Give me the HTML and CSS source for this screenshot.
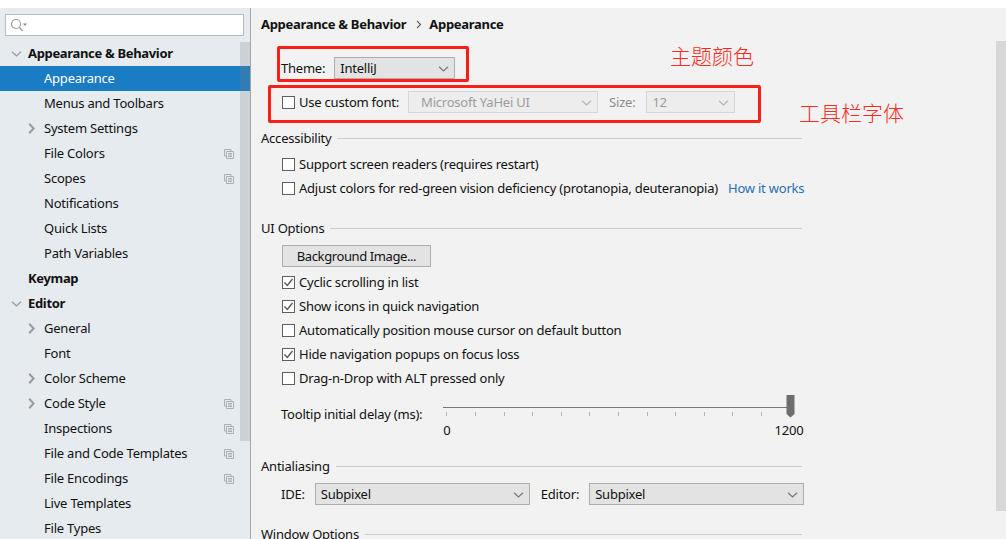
FILE: index.html
```html
<!DOCTYPE html>
<html lang="en">
<head>
<meta charset="utf-8">
<title>Settings</title>
<link rel="stylesheet" href="styles.css">
</head>
<body>
<svg class="defs" width="0" height="0" aria-hidden="true">
  <defs>
    <symbol id="down" viewBox="0 0 11 6"><path d="M1 .8 5.500 5 10 .8" fill="none" stroke="currentColor" stroke-width="1.200"/></symbol>
    <symbol id="right" viewBox="0 0 7 11"><path d="M1.200 .8 5.600 5.500 1.200 10.200" fill="none" stroke="#9a9a9a" stroke-width="2"/></symbol>
    <symbol id="copy" viewBox="0 0 10 10"><path d="M.5.5h6.500v1.500M.5.5v6.500h2M2.500 2.500h7v7h-7zM4 4.500h4M4 6h4M4 7.500h4" fill="none" stroke="#a9b0b5" stroke-width="1"/></symbol>
    <symbol id="tick" viewBox="0 0 13 13"><path d="M2.500 6.500 5.300 9.500 10.500 3" fill="none" stroke="#555" stroke-width="1.300"/></symbol>
  </defs>
</svg>
<div class="app">
  <aside class="sidebar">
    <div class="search">
      <svg class="search-icon" width="18" height="14" viewBox="0 0 18 14"><circle cx="6" cy="6" r="4.500" fill="none" stroke="#a0a0a0" stroke-width="1.200"/><path d="M9.500 9.500 12.500 13" stroke="#a0a0a0" stroke-width="1.400"/><path d="M13 5.500h4l-2 2.500z" fill="#888"/></svg>
    </div>
    <ul class="tree">
      <li class="row top"><svg class="arrow-down"><use href="#down"/></svg>Appearance &amp; Behavior</li>
      <li class="row child selected">Appearance</li>
      <li class="row child">Menus and Toolbars</li>
      <li class="row child"><svg class="arrow-right"><use href="#right"/></svg>System Settings</li>
      <li class="row child">File Colors<svg class="copy"><use href="#copy"/></svg></li>
      <li class="row child">Scopes<svg class="copy"><use href="#copy"/></svg></li>
      <li class="row child">Notifications</li>
      <li class="row child">Quick Lists</li>
      <li class="row child">Path Variables</li>
      <li class="row top">Keymap</li>
      <li class="row top"><svg class="arrow-down"><use href="#down"/></svg>Editor</li>
      <li class="row child"><svg class="arrow-right"><use href="#right"/></svg>General</li>
      <li class="row child">Font</li>
      <li class="row child"><svg class="arrow-right"><use href="#right"/></svg>Color Scheme</li>
      <li class="row child"><svg class="arrow-right"><use href="#right"/></svg>Code Style<svg class="copy"><use href="#copy"/></svg></li>
      <li class="row child">Inspections<svg class="copy"><use href="#copy"/></svg></li>
      <li class="row child">File and Code Templates<svg class="copy"><use href="#copy"/></svg></li>
      <li class="row child">File Encodings<svg class="copy"><use href="#copy"/></svg></li>
      <li class="row child">Live Templates</li>
      <li class="row child">File Types</li>
    </ul>
    <div class="side-scroll"></div>
  </aside>
  <main class="main">
    <h1 class="crumbs"><span>Appearance &amp; Behavior</span><svg class="crumb-sep" width="6" height="9" viewBox="0 0 6 9"><path d="M1 .8 4.500 4.500 1 8.200" fill="none" stroke="#555" stroke-width="1.100"/></svg><span>Appearance</span></h1>

    <div class="line theme-line">
      <span class="label">Theme:</span>
      <div class="select theme-select">IntelliJ<svg class="caret"><use href="#down"/></svg></div>
    </div>
    <div class="line font-line">
      <span class="check"></span><span class="check-text">Use custom font:</span>
      <div class="select disabled font-select">Microsoft YaHei UI<svg class="caret"><use href="#down"/></svg></div>
      <span class="label faded size-label">Size:</span>
      <div class="select disabled size-select">12<svg class="caret"><use href="#down"/></svg></div>
    </div>

    <div class="group group-access"><span>Accessibility</span><i></i></div>
    <div class="opt first-opt"><span class="check"></span><span class="check-text">Support screen readers (requires restart)</span></div>
    <div class="opt"><span class="check"></span><span class="check-text">Adjust colors for red-green vision deficiency (protanopia, deuteranopia)</span><a class="link">How it works</a></div>

    <div class="group group-ui"><span>UI Options</span><i></i></div>
    <button class="btn">Background Image...</button>
    <div class="opt tight"><span class="check"><svg class="tick"><use href="#tick"/></svg></span><span class="check-text">Cyclic scrolling in list</span></div>
    <div class="opt"><span class="check"><svg class="tick"><use href="#tick"/></svg></span><span class="check-text">Show icons in quick navigation</span></div>
    <div class="opt"><span class="check"></span><span class="check-text">Automatically position mouse cursor on default button</span></div>
    <div class="opt"><span class="check"><svg class="tick"><use href="#tick"/></svg></span><span class="check-text">Hide navigation popups on focus loss</span></div>
    <div class="opt"><span class="check"></span><span class="check-text">Drag-n-Drop with ALT pressed only</span></div>

    <div class="slider-line">
      <span class="label slider-label">Tooltip initial delay (ms):</span>
      <div class="slider">
        <div class="track"></div>
        <div class="ticks"><i></i><i></i><i></i><i></i><i></i><i></i><i></i><i></i><i></i><i></i><i></i><i></i></div>
        <div class="scale"><span>0</span><span>1200</span></div>
        <svg class="thumb" width="9" height="23" viewBox="0 0 9 23"><path d="M.5 0h8v19l-4 3.500-4-3.500z" fill="#6e6e6e"/></svg>
      </div>
    </div>

    <div class="group group-anti"><span>Antialiasing</span><i></i></div>
    <div class="line anti-line">
      <span class="label">IDE:</span>
      <div class="select anti-select">Subpixel<svg class="caret"><use href="#down"/></svg></div>
      <span class="label editor-label">Editor:</span>
      <div class="select anti-select">Subpixel<svg class="caret"><use href="#down"/></svg></div>
    </div>
    <div class="group group-window"><span>Window Options</span><i></i></div>

    <div class="main-scroll"></div>
    <div class="mark mark-theme"></div>
    <div class="mark mark-font"></div>
    <div class="note note-theme">主题颜色</div>
    <div class="note note-font">工具栏字体</div>
  </main>
</div>
</body>
</html>
```
FILE: styles.css
```css
* { box-sizing: border-box; }
html, body { margin: 0; padding: 0; height: 539px; overflow: hidden; background: #fff; }
body {
  font-family: "Noto Sans", "Noto Sans CJK SC", sans-serif;
  font-size: 13px;
  letter-spacing: -.22px;
  color: #111;
}
.defs { position: absolute; }
.app { display: flex; height: 531px; margin-top: 8px; overflow: hidden; }

/* sidebar */
.sidebar {
  position: relative;
  width: 251px;
  flex: none;
  background: #e6ebf0;
  border-right: 1px solid #a5a8aa;
  padding-top: 6px;
}
.search {
  height: 22px;
  margin: 0 6px 0 5px;
  background: #fff;
  border: 1px solid #b9bcbe;
  display: flex;
  align-items: center;
  padding-left: 4px;
}
.tree { list-style: none; margin: 5px 0 0; padding: 0; }
.row {
  position: relative;
  height: 25px;
  line-height: 25px;
  white-space: nowrap;
}
.top { padding-left: 28px; font-weight: 700; letter-spacing: -.33px; }
.child { padding-left: 44px; }
.selected { background: #1a7cc3; color: #fff; }
.arrow-down { position: absolute; left: 11px; top: 10px; width: 11px; height: 6px; color: #9a9a9a; stroke-width: 2; }
.arrow-right { position: absolute; left: 28px; top: 7px; width: 7px; height: 11px; }
.copy { position: absolute; left: 224px; top: 8px; width: 10px; height: 10px; }
.side-scroll {
  position: absolute;
  left: 240px;
  top: 34px;
  width: 10px;
  height: 399px;
  background: rgba(120, 125, 130, .24);
}

/* main */
.main { position: relative; flex: 1; background: #f2f2f2; padding: 0 0 0 10px; }
.crumbs {
  display: flex;
  align-items: center;
  height: 16px;
  margin: 8px 0 0;
  font-size: 13px;
  font-weight: 700;
  letter-spacing: -.3px;
}
.crumb-sep { margin: 1px 7px 0 10px; }
.line { display: flex; align-items: center; height: 22px; }
.theme-line { margin: 25px 0 0 20px; }
.font-line { margin: 12px 0 0 21px; }
.anti-line { margin: 8px 0 0 20px; }
.label { white-space: nowrap; }
.faded { color: #8c8c8c; }
.select {
  position: relative;
  height: 22px;
  line-height: 21px;
  padding-left: 5px;
  background: #e3e3e3;
  border: 1px solid #adadad;
  white-space: nowrap;
}
.select.disabled { background: #ededed; border-color: #d6d6d6; color: #9c9c9c; }
.caret { position: absolute; right: 5px; top: 8px; width: 11px; height: 6px; color: #777; }
.disabled .caret { color: #b5b5b5; }
.theme-select { width: 121px; margin-left: 9px; }
.font-select { width: 190px; margin-left: 9px; padding-left: 12px; }
.size-label { margin-left: 11px; }
.size-select { width: 89px; margin-left: 11px; }
.anti-select { width: 215px; }
.anti-line .anti-select:nth-of-type(1) { margin-left: 10px; }
.editor-label { margin-left: 11px; margin-right: 10px; }

.group { display: flex; align-items: center; height: 18px; width: 541px; }
.group i { flex: 1; height: 1px; background: #cdcdcd; margin-left: 6px; }
.group-access { margin-top: 16px; }
.group-ui { margin-top: 19px; }
.group-anti { margin-top: 12px; }
.group-window { margin-top: 20px; }

.opt { display: flex; align-items: center; height: 24px; margin-left: 21px; white-space: nowrap; }
.first-opt { margin-top: 5px; }
.tight { margin-top: 3px; }
.check {
  position: relative;
  flex: none;
  width: 13px;
  height: 13px;
  background: #fff;
  border: 1px solid #5f5f5f;
}
.check-text { margin-left: 4px; }
.tick { position: absolute; left: -1px; top: -1px; width: 13px; height: 13px; }
.link { margin-left: 10px; color: #2470b3; }
.btn {
  display: block;
  width: 149px;
  height: 22px;
  margin: 8px 0 0 21px;
  padding: 0;
  font: inherit;
  letter-spacing: -.4px;
  color: inherit;
  background: #e3e3e3;
  border: 1px solid #adadad;
}

.slider-line { display: flex; margin: 4px 0 0 20px; height: 51px; }
.slider-label { margin-top: 11px; }
.slider { position: relative; width: 361px; margin-left: 21px; padding-top: 13px; }
.track { height: 1px; width: 347px; background: #777; }
.ticks { display: flex; gap: 27.600px; margin: 4px 0 0 3px; }
.ticks i { width: 1px; height: 4px; background: #b5b5b5; }
.scale { display: flex; justify-content: space-between; width: 360px; margin-top: 5px; line-height: 18px; }
.thumb { position: absolute; left: 343px; top: 1px; }

.main-scroll { position: absolute; right: 0; top: 33px; width: 10px; height: 470px; background: #d8d8d8; }

/* hand-drawn annotations lying over the screenshot */
.mark { position: absolute; border: 3px solid #fa1e14; border-radius: 2px; }
.mark-theme { left: 26px; top: 38px; width: 192px; height: 36px; }
.mark-font { left: 17px; top: 77px; width: 493px; height: 38px; }
.note {
  position: absolute;
  color: #fb2a20;
  font-family: "Noto Sans CJK SC", sans-serif;
  font-weight: 300;
  font-size: 21px;
  line-height: 24px;
  letter-spacing: 0;
  white-space: nowrap;
}
.note-theme { left: 419px; top: 35px; }
.note-font { left: 548px; top: 92px; }
```
